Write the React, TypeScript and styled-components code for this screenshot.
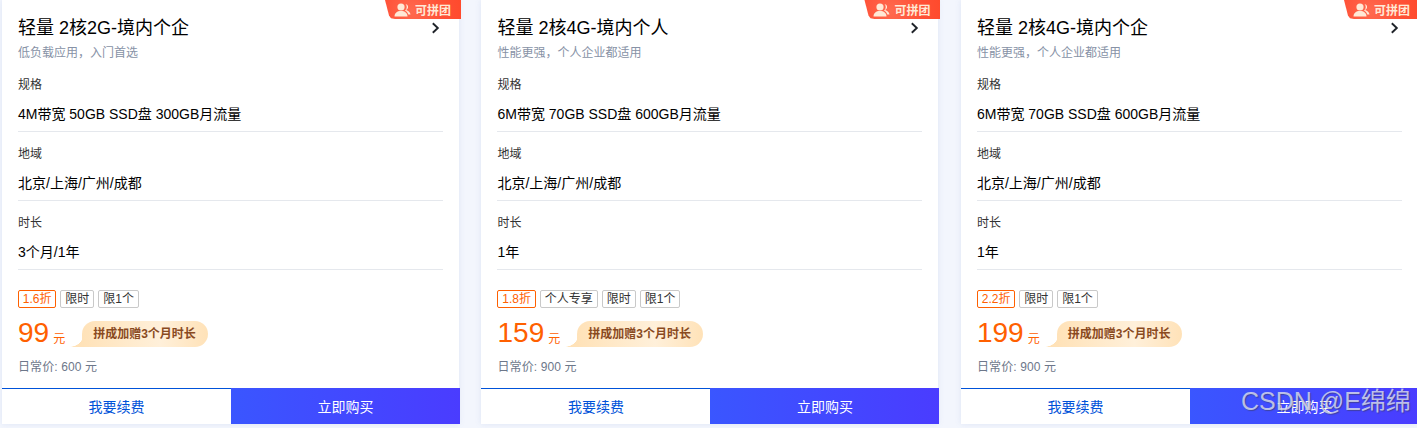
import React from 'react';
import styled, { createGlobalStyle } from 'styled-components';

const GlobalStyle = createGlobalStyle`
  html, body {
    margin: 0;
    padding: 0;
    height: 428px;
    overflow: hidden;
    background: #f3f6fd;
    font-family: "Liberation Sans", "Noto Sans CJK SC", Arial, sans-serif;
  }
`;

const Page = styled.div`
  position: relative;
  width: 1417px;
  height: 428px;
  overflow: hidden;
  display: flex;
  gap: 22.49px;
  padding-left: 2px;
  box-sizing: border-box;
`;

const Card = styled.div`
  position: relative;
  flex: none;
  width: 457px;
  height: 424px;
  background: #fff;
  box-shadow: 0 0 6px rgba(120, 140, 200, 0.16);
  display: flex;
  flex-direction: column;
`;

const Ribbon = styled.div`
  position: absolute;
  top: 0;
  right: -2px;
  width: 76px;
  height: 19px;
  display: flex;
  align-items: center;
  padding-left: 9px;
  gap: 4px;
  box-sizing: border-box;
  background: radial-gradient(circle at 35% 60%, #ff6a4f 0%, #ff5238 55%, #ff4a2c 100%);
  clip-path: polygon(0 0, 100% 0, 100% 100%, 10px 100%, 6px 96%, 4px 82%);
  color: #ffe9d6;
  font-size: 12px;
  font-weight: 700;
`;

const Body = styled.div`
  padding: 17px 16px 0;
  flex: 1;
`;

const TitleRow = styled.div`
  display: flex;
  align-items: center;
  justify-content: space-between;
  height: 22px;
  padding-right: 3px;
`;

const Title = styled.div`
  font-size: 18px;
  line-height: 22px;
  color: #000;
`;

const Subtitle = styled.div`
  margin-top: 5px;
  font-size: 12px;
  line-height: 18px;
  color: #8792a6;
`;

const SpecList = styled.div`
  margin-top: -1px;
  padding-top: 2px;
`;

const Spec = styled.div`
  height: 69px;
  border-bottom: 1px solid #e5e8ed;
  box-sizing: border-box;
  padding-top: 13px;
`;

const SpecLabel = styled.div`
  font-size: 12px;
  line-height: 18px;
  color: #333;
`;

const SpecValue = styled.div`
  margin-top: 10px;
  font-size: 14px;
  line-height: 20px;
  color: #000;
`;

const Tags = styled.div`
  display: flex;
  gap: 4px;
  margin-top: 20px;
`;

const Tag = styled.span<{ $hot?: boolean }>`
  height: 18px;
  padding: 0 ${p => (p.$hot ? '3.75px' : '4px')};
  box-sizing: border-box;
  border: 1px solid ${p => (p.$hot ? '#ff6000' : '#c9c9c9')};
  border-radius: 2px;
  font-size: 12px;
  line-height: 16px;
  color: ${p => (p.$hot ? '#ff6000' : '#333')};
`;

const PriceRow = styled.div`
  display: flex;
  align-items: flex-end;
  margin-top: 13px;
  height: 26px;
`;

const Price = styled.span`
  margin-bottom: 1px;
  font-size: 28px;
  line-height: 26px;
  color: #ff6000;
`;

const Unit = styled.span`
  margin-left: 4px;
  font-size: 12px;
  line-height: 16px;
  color: #ff6000;
`;

const Promo = styled.span`
  position: relative;
  margin-left: 17px;
  height: 26px;
  padding: 0 12px 0 11px;
  border-radius: 13px 13px 13px 0;
  background: linear-gradient(90deg, #ffe2b8 0%, #fff0da 62%, #ffe2b8 100%);
  font-size: 12px;
  font-weight: 700;
  line-height: 26px;
  color: #8a4a1f;

  &::before {
    content: '';
    position: absolute;
    left: -12px;
    bottom: 0;
    width: 14px;
    height: 14px;
    background: radial-gradient(circle at 0 0, transparent 13.5px, #ffe2b8 14px);
  }
`;

const ListPrice = styled.div`
  margin-top: 11px;
  font-size: 12px;
  line-height: 18px;
  letter-spacing: 0.1px;
  color: #6d778a;
`;

const Footer = styled.div`
  display: flex;
  flex: none;
  width: 458px;
  height: 36px;
`;

const RenewButton = styled.div`
  flex: none;
  width: 229px;
  box-sizing: border-box;
  border-top: 1px solid #0052d9;
  display: flex;
  align-items: center;
  justify-content: center;
  padding-bottom: 1px;
  font-size: 14px;
  color: #0052d9;
`;

const BuyButton = styled.div`
  flex: none;
  width: 229px;
  box-sizing: border-box;
  display: flex;
  align-items: center;
  justify-content: center;
  padding-bottom: 1px;
  background: linear-gradient(90deg, #3a56ff 0%, #4a3cff 100%);
  font-size: 14px;
  color: #fff;
`;

const Watermark = styled.div`
  position: absolute;
  left: 1241px;
  top: 385px;
  font-size: 25px;
  line-height: 32px;
  white-space: nowrap;
  color: rgba(222, 226, 240, 0.78);
  text-shadow: 1px 1px 1px rgba(60, 60, 90, 0.55);
`;

const UserIcon = () => (
  <svg width="17" height="14" viewBox="0 0 17 14" fill="#ffe9d6">
    <circle cx="7" cy="4" r="3.6" />
    <path d="M0.5 13.5c0-3.6 2.6-5.6 6.5-5.6s6.5 2 6.5 5.6z" />
    <path d="M11.5 1c1.6.3 2.6 1.5 2.6 3 0 1.400-.8 2.500-2.100 3 .1 0 3.900 1 4.500 4.500h-2.200c-.5-2-1.900-3.300-3.300-4 1.200-1 1.700-2 1.700-3.500 0-1-.3-2-1.200-3z" />
  </svg>
);

const Chevron = () => (
  <svg width="9" height="12" viewBox="0 0 9 12" fill="none" stroke="#1f2329" strokeWidth="1.9">
    <path d="M1.800 1.300 6.800 6l-5 4.700" />
  </svg>
);

type Plan = {
  title: string;
  desc: string;
  spec: string;
  term: string;
  discount: string;
  tags: string[];
  price: number;
  list: number;
};

const plans: Plan[] = [
  {
    title: '轻量 2核2G-境内个企',
    desc: '低负载应用，入门首选',
    spec: '4M带宽 50GB SSD盘 300GB月流量',
    term: '3个月/1年',
    discount: '1.6折',
    tags: ['限时', '限1个'],
    price: 99,
    list: 600,
  },
  {
    title: '轻量 2核4G-境内个人',
    desc: '性能更强，个人企业都适用',
    spec: '6M带宽 70GB SSD盘 600GB月流量',
    term: '1年',
    discount: '1.8折',
    tags: ['个人专享', '限时', '限1个'],
    price: 159,
    list: 900,
  },
  {
    title: '轻量 2核4G-境内个企',
    desc: '性能更强，个人企业都适用',
    spec: '6M带宽 70GB SSD盘 600GB月流量',
    term: '1年',
    discount: '2.2折',
    tags: ['限时', '限1个'],
    price: 199,
    list: 900,
  },
];

export default function App() {
  return (
    <Page>
      <GlobalStyle />
      {plans.map(plan => (
        <Card key={plan.title}>
          <Ribbon>
            <UserIcon />
            可拼团
          </Ribbon>
          <Body>
            <TitleRow>
              <Title>{plan.title}</Title>
              <Chevron />
            </TitleRow>
            <Subtitle>{plan.desc}</Subtitle>
            <SpecList>
              <Spec>
                <SpecLabel>规格</SpecLabel>
                <SpecValue>{plan.spec}</SpecValue>
              </Spec>
              <Spec>
                <SpecLabel>地域</SpecLabel>
                <SpecValue>北京/上海/广州/成都</SpecValue>
              </Spec>
              <Spec>
                <SpecLabel>时长</SpecLabel>
                <SpecValue>{plan.term}</SpecValue>
              </Spec>
            </SpecList>
            <Tags>
              <Tag $hot>{plan.discount}</Tag>
              {plan.tags.map(t => (
                <Tag key={t}>{t}</Tag>
              ))}
            </Tags>
            <PriceRow>
              <Price>{plan.price}</Price>
              <Unit>元</Unit>
              <Promo>拼成加赠3个月时长</Promo>
            </PriceRow>
            <ListPrice>日常价: {plan.list} 元</ListPrice>
          </Body>
          <Footer>
            <RenewButton>我要续费</RenewButton>
            <BuyButton>立即购买</BuyButton>
          </Footer>
        </Card>
      ))}
      <Watermark>CSDN @E绵绵</Watermark>
    </Page>
  );
}
